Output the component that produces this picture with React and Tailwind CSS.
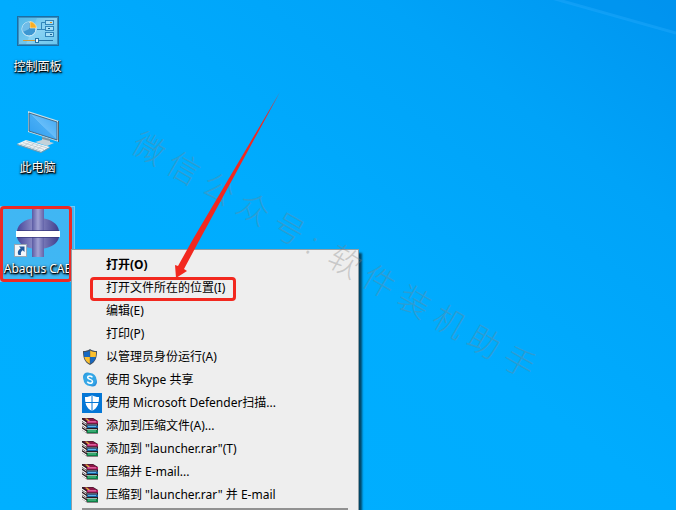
import React from 'react';
import clsx from 'clsx';

const ControlPanelIcon = () => (
    <svg width="42" height="30" viewBox="0 0 42 30" aria-hidden="true">
        <defs>
            <linearGradient id="panel" x1="0" y1="0" x2="1" y2="1">
                <stop offset="0" stopColor="#5bbde9" />
                <stop offset="0.5" stopColor="#8ad3f3" />
                <stop offset="1" stopColor="#6ac6ee" />
            </linearGradient>
        </defs>
        <rect x="0.5" y="0.5" width="41" height="29" fill="#b5e3f7" stroke="#1c6ea3" />
        <rect x="1.5" y="1.5" width="39" height="27" fill="url(#panel)" stroke="#3a8fc0" />
        <path d="M2 2h18L9 28H2z" fill="#3fb0e4" opacity="0.35" />
        <circle cx="12" cy="13" r="7" fill="#3c97d2" stroke="#d9f2fc" />
        <path d="M12 6a7 7 0 0 0-6 10l6-3z" fill="#6fbce8" />
        <path d="M13 5.500a7 7 0 0 1 6.500 6.500H13z" fill="#f9ae22" stroke="#fdf0cc" strokeWidth="0.6" />
        <path d="M20 13.500h4.500v-7H28M24 13.500h4" fill="none" stroke="#3186bb" />
        <g fill="#a6e0f8" stroke="#3186bb">
            <rect x="28.500" y="4.500" width="8" height="4" />
            <rect x="28.500" y="10.500" width="8" height="4" />
            <rect x="28.500" y="16.500" width="8" height="4" />
        </g>
        <path d="M33 6.500h2" stroke="#d88a1c" />
        <path d="M31 12.500h2M33 18.500h2" stroke="#14608f" />
        <path d="M6 24.500h13" stroke="#d99a36" />
        <path d="M21 24.500h15" stroke="#2272a5" />
        <rect x="18.500" y="22.500" width="3" height="4" fill="#e9f8ff" stroke="#2272a5" />
    </svg>
);

const ComputerIcon = () => (
    <svg width="42" height="42" viewBox="0 0 42 42" aria-hidden="true">
        <defs>
            <linearGradient id="screen" x1="0" y1="1" x2="1" y2="0">
                <stop offset="0" stopColor="#2e9df0" />
                <stop offset="0.5" stopColor="#46acf4" />
                <stop offset="0.51" stopColor="#66bdf9" />
                <stop offset="1" stopColor="#3ca5f2" />
            </linearGradient>
        </defs>
        <path d="M11 0l31 10v21L11 21z" fill="#c9dfe9" />
        <path d="M41 10l1 0v21l-1 0z" fill="#4b6474" />
        <path d="M12 2l28 9v18L12 20z" fill="url(#screen)" stroke="#35576e" strokeWidth="0.8" />
        <path d="M25 26l8 2v3l4 1-7 3-12-4 7-2z" fill="#c3d2da" />
        <path d="M25 26l8 2v2l-8-2z" fill="#7c95a3" />
        <path d="M0 33l9-4 24 7-9 5z" fill="#eef3f5" />
        <path d="M0 33l24 8 9-5v1l-9 5L0 34z" fill="#8099a8" />
        <path d="M3 33l21 7M6 31.500l21 7M9 30l21 7M7 35l6-4M11 36.500l6-4M15 38l6-4M19 39l6-4" stroke="#b4c3cc" strokeWidth="0.7" fill="none" />
    </svg>
);

const AbaqusIcon = () => (
    <svg className="overflow-visible" width="44" height="48" viewBox="0 0 44 48" aria-hidden="true">
        <defs>
            <linearGradient id="ball" x1="0" y1="0" x2="1" y2="0">
                <stop offset="0" stopColor="#46469a" />
                <stop offset="0.45" stopColor="#9898cd" />
                <stop offset="0.55" stopColor="#8484c0" />
                <stop offset="1" stopColor="#3e3e8c" />
            </linearGradient>
            <linearGradient id="stem" x1="0" y1="0" x2="1" y2="0">
                <stop offset="0" stopColor="#5a5aa3" />
                <stop offset="0.5" stopColor="#a2a2d4" />
                <stop offset="1" stopColor="#6262a8" />
            </linearGradient>
        </defs>
        <path d="M1 22C2 14 10 10.500 16 9.500H28C34 10.500 42 14 43 22z" fill="url(#ball)" />
        <path d="M1 28C2 35 10 38.500 16 39.500H28C34 38.500 42 35 43 28z" fill="url(#ball)" />
        <path d="M16 0h12v22H16zM16 28h12v20H16z" fill="url(#stem)" />
        <path d="M0 22h44v6H0z" fill="#fff" />
        <path d="M1 21h42v1H1zM1 28h42v1H1z" fill="#35357c" opacity="0.7" />
        <rect x="-1.500" y="35.500" width="12" height="12" fill="#f3f6fa" stroke="#9aa7b4" />
        <path d="M3 37.500h5.500V43L6.700 41.300C5 42.300 4.500 44 5 46H2.500C1 43.500 2 41 4.700 39.300z" fill="#225a9c" />
    </svg>
);

const UacShieldIcon = () => (
    <svg width="16" height="16" viewBox="0 0 16 16" aria-hidden="true">
        <path d="M8 0c2 1.500 4 2 7 2 0 6-1 11-7 14C2 13 1 8 1 2c3 0 5-.5 7-2z" fill="#45505c" />
        <path d="M7.800 1.500V8H2.300C2 6 2 5 2 3c2 0 4-.5 5.800-1.500z" fill="#1769c2" />
        <path d="M8.200 1.500V8h5.500C14 6 14 5 14 3c-2 0-4-.5-5.800-1.500z" fill="#fcc02e" />
        <path d="M7.800 8H2.300c.6 3 2.500 5.200 5.500 6.800z" fill="#fcc02e" />
        <path d="M8.200 8h5.500c-.6 3-2.500 5.200-5.500 6.800z" fill="#1769c2" />
    </svg>
);

const SkypeIcon = () => (
    <svg width="16" height="16" viewBox="0 0 16 16" aria-hidden="true">
        <circle cx="5.500" cy="5" r="4.500" fill="#2b9de0" />
        <circle cx="10.500" cy="10" r="4.500" fill="#2b8fdc" />
        <circle cx="8" cy="7.500" r="6.500" fill="#34a6e6" />
        <path d="M10.400 5.300C9.800 4.200 8.900 3.900 7.900 3.900 6.500 3.900 5.700 4.600 5.700 5.500c0 2.400 4.800 1.400 4.800 3.900 0 1.100-1 1.800-2.500 1.800-1.300 0-2.200-.5-2.700-1.600" fill="none" stroke="#fff" strokeWidth="1.500" />
    </svg>
);

const DefenderIcon = () => (
    <svg width="20" height="20" viewBox="0 0 20 20" aria-hidden="true">
        <path d="M0 0h20v20H0z" fill="#0477d6" />
        <path d="M10 2c2 1.500 4 2 7 2 0 6-1 11-7 14C4 15 3 10 3 4c3 0 5-.5 7-2z" fill="#fff" />
        <path d="M10 1v18M2 9.500h16" stroke="#0477d6" />
    </svg>
);

const RarIcon = () => (
    <svg width="16" height="16" viewBox="0 0 16 16" aria-hidden="true">
        <path d="M0 0h11l5 3v12.500H5L0 12z" fill="#2a1a20" />
        <path d="M1 0.500h10L15 3H5z" fill="#8c1648" />
        <path d="M3 0.500h2L8 3H6z" fill="#e0b93a" />
        <path d="M5 3h11v2.500H5z" fill="#b01f62" />
        <path d="M6 3.800h8" stroke="#ee79b3" />
        <path d="M5 6.500h10v1H5z" fill="#8aa5ba" />
        <path d="M5 7.500h11v2.500H5z" fill="#155f9f" />
        <path d="M6 8.500h8" stroke="#5fb4ea" />
        <path d="M5 11h10v1H5z" fill="#9dbcae" />
        <path d="M5 12h11v3H5z" fill="#0f8048" />
        <path d="M6 13h8" stroke="#5fd39a" />
        <path d="M0 1.500L4.500 4.500V6L0 3zM0 6L4.500 9v1.500L0 7.500zM0 10.500l4.500 3V15L0 12z" fill="#fafafa" />
        <path d="M0 4L4.500 7M0 8.500l4.500 3" stroke="#d4d4d4" />
    </svg>
);

const shortcuts = [
    { name: '控制面板', icon: ControlPanelIcon },
    { name: '此电脑', icon: ComputerIcon },
    { name: 'Abaqus CAE', icon: AbaqusIcon, selected: true },
];

const menuItems = [
    { label: '打开(O)', bold: true },
    { label: '打开文件所在的位置(I)', marked: true },
    { label: '编辑(E)' },
    { label: '打印(P)' },
    { label: '以管理员身份运行(A)', icon: UacShieldIcon },
    { label: '使用 Skype 共享', icon: SkypeIcon },
    { label: '使用 Microsoft Defender扫描...', icon: DefenderIcon },
    { label: '添加到压缩文件(A)...', icon: RarIcon },
    { label: '添加到 "launcher.rar"(T)', icon: RarIcon },
    { label: '压缩并 E-mail...', icon: RarIcon },
    { label: '压缩到 "launcher.rar" 并 E-mail', icon: RarIcon },
];

const Shortcut = ({ name, icon: Icon, selected }) => (
    <button
        type="button"
        className={clsx(
            'relative flex w-[75px] flex-col items-center border pt-[2px] pb-[2px]',
            selected ? 'border-white/25 bg-[#80c0e8]/50' : 'border-transparent'
        )}
    >
        <span className="flex h-12 items-center justify-center">
            <Icon />
        </span>
        <span className="mt-0.5 text-xs leading-5 whitespace-nowrap text-white [text-shadow:1px_1px_1px_#000,1px_1px_3px_#000,0_1px_2px_#000]">
            {name}
        </span>
        {selected && <span className="absolute -inset-y-px -left-px w-[72px] rounded-[4px] border-3 border-[#ec2a25]"></span>}
    </button>
);

const ContextMenu = () => (
    <div
        role="menu"
        className="absolute top-[249px] left-[71px] w-72 border border-[#8f9ea6] bg-[#eeeeee] py-[3px] shadow-[3px_4px_2px_rgba(0,0,0,0.6)]"
    >
        {menuItems.map(({ label, icon: Icon, bold, marked }) => (
            <button
                key={label}
                type="button"
                role="menuitem"
                className={clsx(
                    'relative flex h-[23px] w-full items-center pl-[10px] text-left text-xs whitespace-nowrap text-black',
                    bold && 'font-bold'
                )}
            >
                <span className="w-6 shrink-0">{Icon && <Icon />}</span>
                <span>{label}</span>
                {marked && (
                    <span className="absolute top-px left-[18px] h-6 w-[146px] rounded-[4px] border-3 border-[#f2281f]"></span>
                )}
            </button>
        ))}
        <hr className="mx-[10px] mt-[2px] border-t-2 border-[#919191]" />
        <div className="h-6"></div>
    </div>
);

const Watermark = () => (
    <p className="pointer-events-none absolute top-[132px] left-[133px] origin-[16px_16px] rotate-30 text-[32px] leading-8 font-light whitespace-pre text-[#828282]/35">
        {'微 信 公 众 号 :  软 件 装 机 助 手'}
    </p>
);

const App = () => {
    return (
        <main className="relative h-screen overflow-hidden bg-[linear-gradient(to_top_right,#00b0ff_0%,#00acfe_50%,#00a3f8_78%,#0095f0_100%)] font-['Noto_Sans','Noto_Sans_CJK_SC',sans-serif]">
            {/* Light beam of the wallpaper */}
            <svg className="absolute top-0 right-0" width="136" height="40" viewBox="0 0 136 40" aria-hidden="true">
                <path d="M8-3L136 33V-3z" fill="#0090ea" opacity="0.35" />
                <path d="M8-3L136 33" stroke="#22a9fc" strokeWidth="3" opacity="0.45" />
            </svg>

            <div className="flex flex-col items-start gap-[25px] pt-1">
                {shortcuts.map((item) => (
                    <Shortcut key={item.name} {...item} />
                ))}
            </div>

            <ContextMenu />
            <Watermark />

            <svg className="pointer-events-none absolute top-[90px] left-[170px]" width="115" height="190" viewBox="170 90 115 190" aria-hidden="true">
                <path d="M280 92L192.500 240L178 266L175 265L176 278L187 271L184 269L199.500 240z" fill="#f2281f" />
            </svg>
        </main>
    );
};

export default App;
